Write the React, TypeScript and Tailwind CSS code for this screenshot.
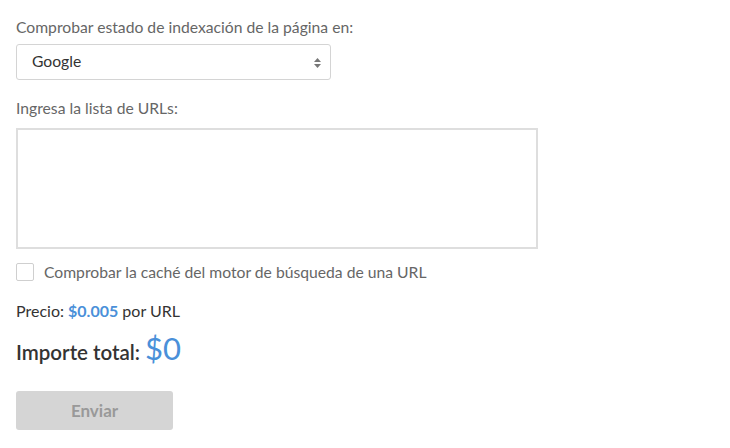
export default function App() {
  return (
    <div className="min-h-screen bg-white px-4 pt-[16px] font-['Lato',sans-serif] text-[#333]">
      <label className="block text-[15.7px] leading-[22px] text-[#666]">
        Comprobar estado de indexación de la página en:
      </label>
      <div className="relative mt-[6px] h-[36px] w-[315px] rounded-[3px] border border-[#d4d4d4] bg-white">
        <div className="flex h-full items-center pl-[15px] text-[15.7px] text-[#333]">Google</div>
        <svg className="absolute right-[9px] top-[13px]" width="7" height="10" viewBox="0 0 7 10">
          <path d="M3.5 0 L7 4 L0 4 Z" fill="#777" />
          <path d="M3.5 10 L7 6 L0 6 Z" fill="#777" />
        </svg>
      </div>

      <label className="mt-[17px] block text-[15.7px] leading-[22px] text-[#666]">
        Ingresa la lista de URLs:
      </label>
      <textarea className="mt-[9px] block h-[121px] w-[522px] resize-none border-2 border-[#dedede] bg-white outline-none" />

      <div className="mt-[12px] flex items-center gap-[10px]">
        <span className="block h-[18px] w-[18px] rounded-[2px] border border-[#cfcfcf] bg-white" />
        <span className="text-[15.7px] leading-[22px] text-[#666]">
          Comprobar la caché del motor de búsqueda de una URL
        </span>
      </div>

      <p className="mt-[17px] text-[16px] leading-[22px] text-[#333]">
        Precio: <span className="font-bold text-[#4a90d9]">$0.005</span> por URL
      </p>

      <p className="mt-[6px] flex items-baseline gap-[5px]">
        <span className="text-[20.5px] font-semibold text-[#333]">Importe total:</span>
        <span className="text-[31px] leading-[40px] text-[#4a90d9]">$0</span>
      </p>

      <button className="mt-[23px] h-[39px] w-[157px] rounded-[3px] bg-[#d5d5d5] text-[17px] font-bold text-[#999]">
        Enviar
      </button>
    </div>
  );
}
